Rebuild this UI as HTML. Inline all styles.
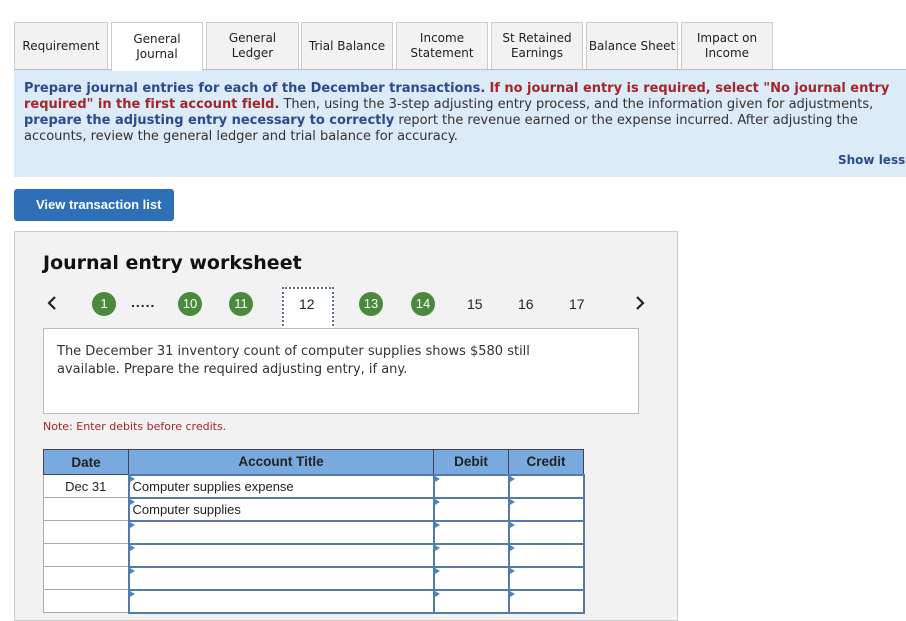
<!DOCTYPE html>
<html><head><meta charset="utf-8"><style>
*{box-sizing:border-box;margin:0;padding:0}
body{width:906px;height:615px;overflow:hidden;background:#fff;font-family:"DejaVu Sans","Liberation Sans",sans-serif;position:relative;color:#222}
.a{position:absolute}
.tab{position:absolute;top:22px;height:47px;border:1px solid #ccc;border-bottom:none;background:#f2f2f2;font-size:12px;display:flex;align-items:center;justify-content:center;text-align:center;line-height:15px;color:#222}
.tab.on{background:#fff;height:49px;z-index:2}
.panel{left:14px;top:69px;width:892px;height:108px;background:#dcebf8;border-top:1px solid #bbb}
.ptxt{left:24px;top:81px;width:880px;font-size:13px;line-height:16px;color:#333;letter-spacing:-0.02px}
.b{font-weight:bold;color:#2b4a8c}.r{font-weight:bold;color:#a3262a}
.c{position:absolute;top:292px;width:24px;height:24px;border-radius:50%;background:#4a8a3c;color:#fff;font-family:"Liberation Sans",sans-serif;font-size:13px;text-align:center;line-height:24px}
.n{position:absolute;top:296px;font-family:"Liberation Sans",sans-serif;font-size:14px;color:#222}
table{position:absolute;left:43px;top:449px;border-collapse:collapse;font-family:"Liberation Sans",sans-serif;font-size:13px}
th{background:#79aadf;color:#222;height:25px;border:1px solid #445;font-weight:bold;font-size:13.5px}
td{height:23px;background:#fff;border:1px solid #aaa;position:relative}
td.x{border:2px solid #557aa7}
td.x:before{content:"";position:absolute;left:0;top:0;border-left:5px solid #4a86c5;border-top:3px solid transparent;border-bottom:3px solid transparent}
</style></head><body>
<div class="tab" style="left:14px;width:94px">Requirement</div>
<div class="tab on" style="left:111px;width:92px">General<br>Journal</div>
<div class="tab" style="left:206px;width:93px">General<br>Ledger</div>
<div class="tab" style="left:301px;width:92px">Trial Balance</div>
<div class="tab" style="left:396px;width:92px">Income<br>Statement</div>
<div class="tab" style="left:491px;width:92px">St Retained<br>Earnings</div>
<div class="tab" style="left:586px;width:92px">Balance Sheet</div>
<div class="tab" style="left:681px;width:92px">Impact on<br>Income</div>
<div class="a panel"></div>
<div class="a ptxt"><span class="b">Prepare journal entries for each of the December transactions.</span> <span class="r">If no journal entry is required, select "No journal entry required" in the first account field.</span> Then, using the 3-step adjusting entry process, and the information given for adjustments, <span class="b">prepare the adjusting entry necessary to correctly</span> report the revenue earned or the expense incurred. After adjusting the accounts, review the general ledger and trial balance for accuracy.</div>
<div class="a" style="left:838px;top:153px;font-size:12px;font-weight:bold;color:#2b4a8c;white-space:nowrap">Show less ▴</div>
<div class="a" style="left:14px;top:189px;width:160px;height:32px;background:#2f6fb7;border-radius:3px;color:#fff;font-family:'Liberation Sans',sans-serif;font-weight:bold;font-size:13px;line-height:32px;padding-left:22px">View transaction list</div>
<div class="a" style="left:14px;top:231px;width:664px;height:390px;background:#f2f2f2;border:1px solid #ccc"></div>
<div class="a" style="left:43px;top:252px;font-size:19px;font-weight:bold;color:#111">Journal entry worksheet</div>
<svg class="a" style="left:46px;top:295px" width="12" height="16"><path d="M9 2 L3 8 L9 14" fill="none" stroke="#222" stroke-width="2.2"/></svg>
<div class="c" style="left:92px">1</div>
<div class="n" style="left:131px;top:294px;font-weight:bold;letter-spacing:1px">.....</div>
<div class="c" style="left:178px">10</div>
<div class="c" style="left:229px">11</div>
<div class="a" style="left:282px;top:287px;width:52px;height:43px;background:#fff;border:2px dotted #5b6f86"></div>
<div class="n" style="left:299px">12</div>
<div class="c" style="left:359px">13</div>
<div class="c" style="left:411px">14</div>
<div class="n" style="left:467px">15</div>
<div class="n" style="left:518px">16</div>
<div class="n" style="left:569px">17</div>
<svg class="a" style="left:634px;top:295px" width="12" height="16"><path d="M3 2 L9 8 L3 14" fill="none" stroke="#222" stroke-width="2.2"/></svg>
<div class="a" style="left:43px;top:328px;width:596px;height:86px;background:#fff;border:1px solid #bbb"></div>
<div class="a" style="left:57px;top:343px;font-size:13px;line-height:18px;color:#333">The December 31 inventory count of computer supplies shows $580 still<br>available. Prepare the required adjusting entry, if any.</div>
<div class="a" style="left:43px;top:420px;font-size:11px;color:#a3262a">Note: Enter debits before credits.</div>
<table>
<tr><th style="width:85px">Date</th><th style="width:305px">Account Title</th><th style="width:75px">Debit</th><th style="width:75px">Credit</th></tr>
<tr><td style="text-align:center">Dec 31</td><td class="x" style="padding-left:3px">Computer supplies expense</td><td class="x"></td><td class="x"></td></tr>
<tr><td></td><td class="x" style="padding-left:3px">Computer supplies</td><td class="x"></td><td class="x"></td></tr>
<tr><td></td><td class="x"></td><td class="x"></td><td class="x"></td></tr>
<tr><td></td><td class="x"></td><td class="x"></td><td class="x"></td></tr>
<tr><td></td><td class="x"></td><td class="x"></td><td class="x"></td></tr>
<tr><td></td><td class="x"></td><td class="x"></td><td class="x"></td></tr>
</table>
</body></html>
